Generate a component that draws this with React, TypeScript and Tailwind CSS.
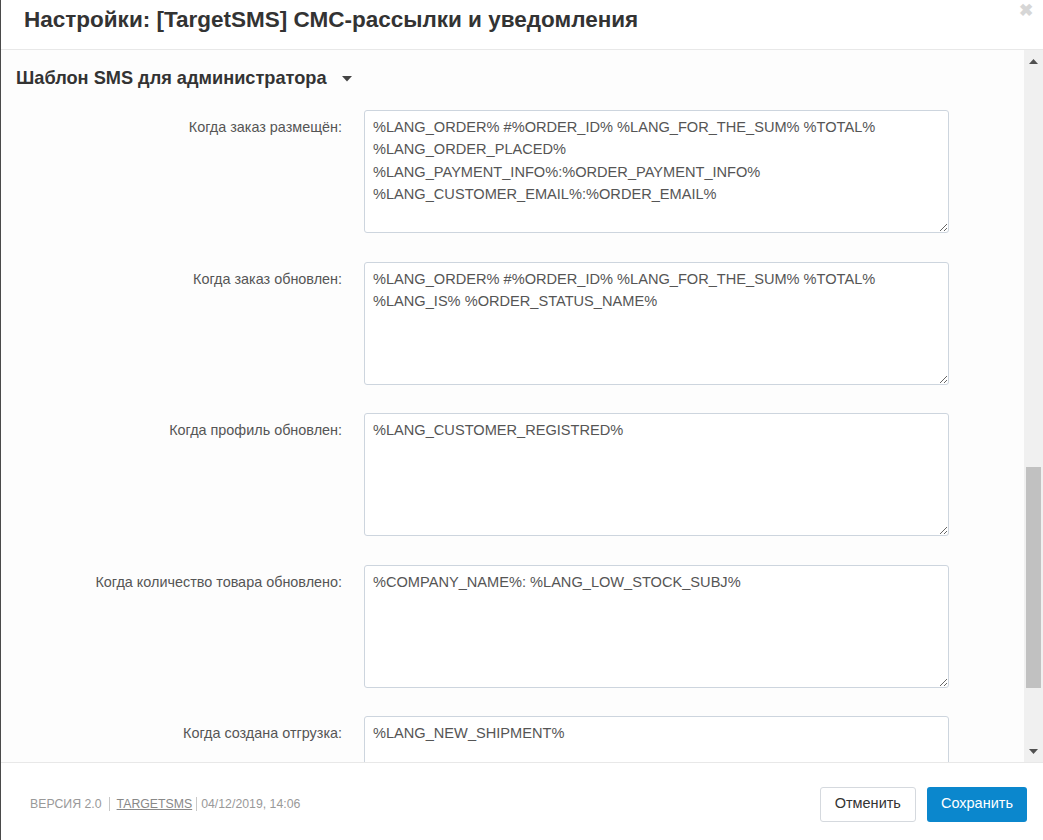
import React from "react";

type Row = { label: string; value: string };

const rows: Row[] = [
  {
    label: "Когда заказ размещён:",
    value:
      "%LANG_ORDER% #%ORDER_ID% %LANG_FOR_THE_SUM% %TOTAL%\n%LANG_ORDER_PLACED%\n%LANG_PAYMENT_INFO%:%ORDER_PAYMENT_INFO%\n%LANG_CUSTOMER_EMAIL%:%ORDER_EMAIL%",
  },
  {
    label: "Когда заказ обновлен:",
    value:
      "%LANG_ORDER% #%ORDER_ID% %LANG_FOR_THE_SUM% %TOTAL%\n%LANG_IS% %ORDER_STATUS_NAME%",
  },
  { label: "Когда профиль обновлен:", value: "%LANG_CUSTOMER_REGISTRED%" },
  {
    label: "Когда количество товара обновлено:",
    value: "%COMPANY_NAME%: %LANG_LOW_STOCK_SUBJ%",
  },
  { label: "Когда создана отгрузка:", value: "%LANG_NEW_SHIPMENT%" },
];

export default function App() {
  return (
    <div
      className="flex h-[840px] w-[1043px] overflow-hidden bg-white text-[#333]"
      style={{ fontFamily: '"Liberation Sans", Arial, sans-serif' }}
    >
      {/* backdrop edge */}
      <div className="w-px shrink-0 bg-[#4a4a4a]" />

      <div className="flex min-w-0 flex-1 flex-col">
        {/* Header */}
        <div className="relative flex h-[50px] shrink-0 items-start border-b border-[#e8e8e8] pl-[23px] pt-[9px]">
          <h1 className="text-[22.5px] font-bold leading-none text-[#333]">
            Настройки: [TargetSMS] СМС-рассылки и уведомления
          </h1>
          <span className="absolute right-[10px] top-[2px] text-[17px] font-bold leading-none text-[#d6d6d6]">
            ✖
          </span>
        </div>

        {/* Body */}
        <div className="flex min-h-0 flex-1">
          <div className="min-w-0 flex-1 overflow-hidden bg-[#fdfdfd]">
            <div className="flex h-[58px] items-center gap-[15px] pl-[15px]">
              <span className="text-[18.2px] font-bold text-[#333]">
                Шаблон SMS для администратора
              </span>
              <svg width="10" height="6" viewBox="0 0 10 6">
                <path d="M0 0h10L5 5.5z" fill="#444" />
              </svg>
            </div>

            <div className="flex flex-col gap-[28.5px] pt-[2px]">
              {rows.map((r) => (
                <div key={r.label} className="flex">
                  <div className="w-[341px] shrink-0 pt-[7px] text-right text-[14.4px] text-[#555]">
                    {r.label}
                  </div>
                  <div className="pl-[22px]">
                    <textarea
                      readOnly
                      defaultValue={r.value}
                      className="block h-[123px] w-[585px] rounded-[3px] border border-[#cdd5de] bg-white px-[8px] py-[5px] text-[14.6px] leading-[22.4px] text-[#555] outline-none"
                      style={{ fontFamily: '"Liberation Sans", Arial, sans-serif' }}
                    />
                  </div>
                </div>
              ))}
            </div>
          </div>

          {/* Scrollbar */}
          <div className="flex w-[19px] shrink-0 flex-col bg-[#f0f0f0]">
            <div className="flex h-[22px] items-center justify-center">
              <svg width="9" height="5" viewBox="0 0 9 5">
                <path d="M4.5 0L9 5H0z" fill="#505050" />
              </svg>
            </div>
            <div className="h-[395px]" />
            <div className="mx-[2px] h-[221px] bg-[#c1c1c1]" />
            <div className="flex-1" />
            <div className="flex h-[22px] items-center justify-center">
              <svg width="9" height="5" viewBox="0 0 9 5">
                <path d="M0 0h9L4.5 5z" fill="#505050" />
              </svg>
            </div>
          </div>
        </div>

        {/* Footer */}
        <div className="flex h-[78px] shrink-0 items-center justify-between border-t border-[#e8e8e8] bg-white pl-[29px] pr-[16px] pt-[5px]">
          <div className="flex items-center text-[12.3px] text-[#999]">
            <span>ВЕРСИЯ 2.0</span>
            <span className="mx-[7px] h-[14px] w-px bg-[#c8c8c8]" />
            <span className="text-[#888] underline">TARGETSMS</span>
            <span className="mx-[4px] h-[14px] w-px bg-[#c8c8c8]" />
            <span>04/12/2019, 14:06</span>
          </div>
          <div className="flex items-center gap-[11px]">
            <button className="h-[35px] rounded-[3px] border border-[#d5d9de] bg-white px-[14px] text-[14.5px] text-[#333]">
              Отменить
            </button>
            <button className="h-[35px] rounded-[3px] bg-[#0b87cd] px-[14px] text-[14.5px] text-white">
              Сохранить
            </button>
          </div>
        </div>
      </div>
    </div>
  );
}
